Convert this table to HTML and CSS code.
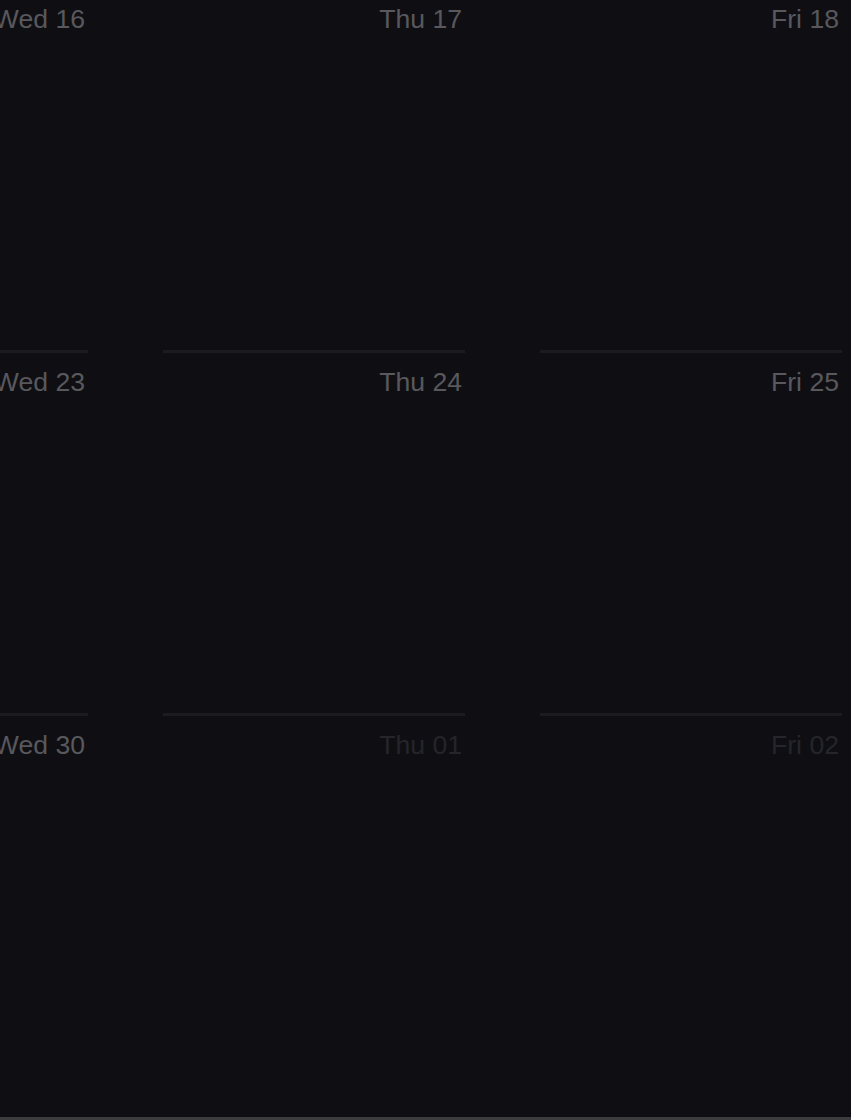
FILE: index.html
```html
<!DOCTYPE html>
<html>
<head>
<meta charset="utf-8">
<link rel="stylesheet" href="styles.css">
</head>
<body>
<div class="page">
  <div class="calendar">
    <div class="day"><span class="label">Wed 16</span></div>
    <div class="day"><span class="label">Thu 17</span></div>
    <div class="day"><span class="label">Fri 18</span></div>
    <div class="day"><span class="label">Wed 23</span></div>
    <div class="day"><span class="label">Thu 24</span></div>
    <div class="day"><span class="label">Fri 25</span></div>
    <div class="day last"><span class="label">Wed 30</span></div>
    <div class="day last other"><span class="label">Thu 01</span></div>
    <div class="day last other"><span class="label">Fri 02</span></div>
  </div>
  <div class="scrollbar"></div>
</div>
</body>
</html>
```
FILE: styles.css
```css
html, body {
  margin: 0;
  padding: 0;
  background: #0f0f13;
  overflow: hidden;
}
.page {
  height: 1120px;
  display: flex;
  flex-direction: column;
  overflow: hidden;
}
.calendar {
  flex: 1;
  display: grid;
  grid-template-columns: repeat(3, 302px);
  grid-template-rows: 363px 363px 1fr;
  column-gap: 75px;
  margin-left: -214px;
  margin-top: -10px;
  font-family: "Liberation Sans", Arial, sans-serif;
}
.day {
  display: flex;
  flex-direction: column;
  align-items: flex-end;
  padding: 14px 3px 0 0;
  border-bottom: 3px solid #1b1b20;
}
.day.last {
  border-bottom: none;
}
.label {
  font-size: 26.6px;
  line-height: 30px;
  color: #58585d;
}
.other .label {
  color: #25252a;
}
.scrollbar {
  height: 3px;
  background: #3c3c3f;
  flex: none;
}
```
